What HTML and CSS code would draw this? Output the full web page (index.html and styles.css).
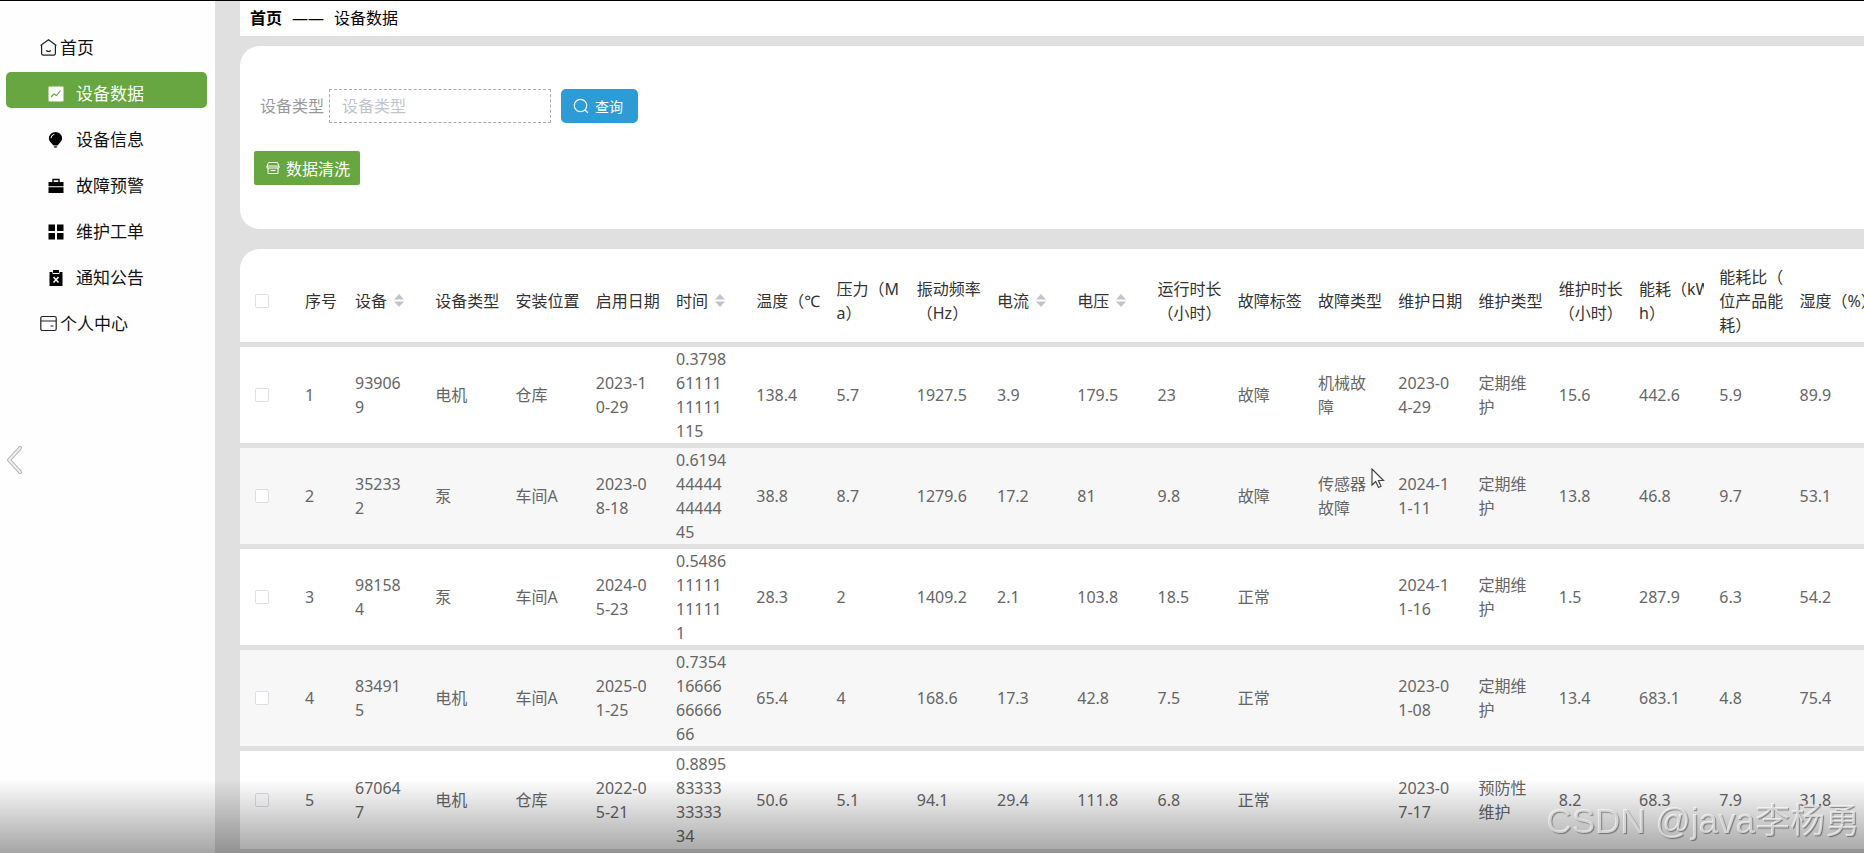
FILE: index.html
```html
<!DOCTYPE html>
<html lang="zh-CN">
<head>
  <meta charset="UTF-8">
  <meta name="viewport" content="width=device-width, initial-scale=1.0">
  <title>设备数据</title>
  <link rel="stylesheet" href="styles.css">
</head>
<body>
  <div class="layout">
    <nav class="sidebar">
      <a class="menu-item top" href="#">
        <svg class="icon" viewBox="0 0 17 17" fill="none" stroke="#222" stroke-width="1.2"><path d="M.6 6.5 8.5.8 16.4 6.5 M1.6 5.8V14.5Q1.6 16.2 3.3 16.2H13.7Q15.4 16.2 15.4 14.5V5.8 M6.2 11.5Q8.5 13.5 10.8 11.5"/></svg>
        <span>首页</span>
      </a>
      <a class="menu-item active" href="#">
        <svg class="icon" viewBox="0 0 16 16"><rect x="0.5" y="0.5" width="15" height="15" rx="1" fill="#fff"/><path d="M3 11 6 8 8.5 9.5 12.5 4.5" fill="none" stroke="#67a640" stroke-width="1.2"/></svg>
        <span>设备数据</span>
      </a>
      <a class="menu-item" href="#">
        <svg class="icon" viewBox="0 0 16 16"><path d="M7.5 0A6.6 6.4 0 0 0 .9 6.3C.9 9.5 3.5 11 5 13.2H10C11.5 11 14.1 9.5 14.1 6.3A6.6 6.4 0 0 0 7.5 0Z"/><path d="M5.5 13.6H9.5L8.5 16H6.5Z" fill="#555"/><path d="M3 6.2Q3.2 3 6.4 2.2" fill="none" stroke="#fff"/></svg>
        <span>设备信息</span>
      </a>
      <a class="menu-item" href="#">
        <svg class="icon" viewBox="0 0 16 16"><path d="M5 4V1.5H11V4" fill="none" stroke="#000" stroke-width="1.4"/><path d="M.5 4H15.5V8.3H.5Z M.5 9.3H15.5V15H.5Z"/></svg>
        <span>故障预警</span>
      </a>
      <a class="menu-item" href="#">
        <svg class="icon" viewBox="0 0 16 16"><path d="M.5.5H7V7H.5Z M9 .5H15.5V7H9Z M.5 9H7V15.5H.5Z M9 9H15.5V15.5H9Z"/></svg>
        <span>维护工单</span>
      </a>
      <a class="menu-item" href="#">
        <svg class="icon" viewBox="0 0 16 16"><path d="M1.5 2H4.5V4H11.5V2H14.5V16H1.5Z M5 0H11V3H5Z"/><path d="M5.5 7 10.5 12.5 M10.5 7 5.5 12.5" stroke="#fff" stroke-width="1.5"/></svg>
        <span>通知公告</span>
      </a>
      <a class="menu-item top" href="#">
        <svg class="icon" viewBox="0 0 17 17" fill="none" stroke="#222" stroke-width="1.2"><rect x="0.8" y="1.5" width="15.4" height="14" rx="1.5"/><path d="M1 6H16 M10.5 11H13.5"/></svg>
        <span>个人中心</span>
      </a>
    </nav>

    <main class="main">
      <div class="breadcrumb"><b>首页</b><span>——</span><span>设备数据</span></div>

      <form class="card search-card">
        <div class="search-row">
          <label for="deviceType">设备类型</label>
          <input id="deviceType" type="text" placeholder="设备类型">
          <button class="btn-query" type="button">
            <svg width="16" height="16" viewBox="0 0 16 16" fill="none" stroke="#fff" stroke-width="1.2"><circle cx="7.5" cy="7.5" r="6.2"/><path d="M12 12 15 15"/></svg>
            查询
          </button>
        </div>
        <button class="btn-clean" type="button">
          <svg width="14" height="14" viewBox="0 0 14 14" fill="none" stroke="#fff"><path d="M2.5 1.5H11.5L13 5H1Z M1 5V7H13V5 M2 7V12.5H12V7 M4.5 9.5H9.5"/></svg>
          数据清洗
        </button>
      </form>

      <div class="card table-card">
        <table class="data-table">
          <colgroup><col class="col-check"><col class="col-index"><col span="19"></colgroup>
          <thead>
            <tr>
              <th><input type="checkbox" aria-label="全选"></th>
              <th>序号</th>
              <th>设备<svg class="sort" viewBox="0 0 10 13"><path d="M5 0 10 5.5H0Z M0 7.5H10L5 13Z"/></svg></th>
              <th>设备类型</th>
              <th>安装位置</th>
              <th>启用日期</th>
              <th>时间<svg class="sort" viewBox="0 0 10 13"><path d="M5 0 10 5.5H0Z M0 7.5H10L5 13Z"/></svg></th>
              <th>温度（℃</th>
              <th>压力（M<br>a）</th>
              <th>振动频率<br>（Hz）</th>
              <th>电流<svg class="sort" viewBox="0 0 10 13"><path d="M5 0 10 5.5H0Z M0 7.5H10L5 13Z"/></svg></th>
              <th>电压<svg class="sort" viewBox="0 0 10 13"><path d="M5 0 10 5.5H0Z M0 7.5H10L5 13Z"/></svg></th>
              <th>运行时长<br>（小时）</th>
              <th>故障标签</th>
              <th>故障类型</th>
              <th>维护日期</th>
              <th>维护类型</th>
              <th>维护时长<br>（小时）</th>
              <th><div class="clip">能耗（kW<br>h）</div></th>
              <th><div class="clip">能耗比（单<br>位产品能<br>耗）</div></th>
              <th>湿度（%）</th>
            </tr>
          </thead>
          <tbody>
            <tr>
              <td><input type="checkbox" aria-label="选择第1行"></td>
              <td>1</td><td>939069</td><td>电机</td><td>仓库</td><td>2023-10-29</td><td>0.37986111111111115</td>
              <td>138.4</td><td>5.7</td><td>1927.5</td><td>3.9</td><td>179.5</td><td>23</td>
              <td>故障</td><td>机械故障</td><td>2023-04-29</td><td>定期维护</td>
              <td>15.6</td><td>442.6</td><td>5.9</td><td>89.9</td>
            </tr>
            <tr>
              <td><input type="checkbox" aria-label="选择第2行"></td>
              <td>2</td><td>352332</td><td>泵</td><td>车间A</td><td>2023-08-18</td><td>0.6194444444444445</td>
              <td>38.8</td><td>8.7</td><td>1279.6</td><td>17.2</td><td>81</td><td>9.8</td>
              <td>故障</td><td>传感器故障</td><td>2024-11-11</td><td>定期维护</td>
              <td>13.8</td><td>46.8</td><td>9.7</td><td>53.1</td>
            </tr>
            <tr>
              <td><input type="checkbox" aria-label="选择第3行"></td>
              <td>3</td><td>981584</td><td>泵</td><td>车间A</td><td>2024-05-23</td><td>0.548611111111111</td>
              <td>28.3</td><td>2</td><td>1409.2</td><td>2.1</td><td>103.8</td><td>18.5</td>
              <td>正常</td><td></td><td>2024-11-16</td><td>定期维护</td>
              <td>1.5</td><td>287.9</td><td>6.3</td><td>54.2</td>
            </tr>
            <tr>
              <td><input type="checkbox" aria-label="选择第4行"></td>
              <td>4</td><td>834915</td><td>电机</td><td>车间A</td><td>2025-01-25</td><td>0.7354166666666666</td>
              <td>65.4</td><td>4</td><td>168.6</td><td>17.3</td><td>42.8</td><td>7.5</td>
              <td>正常</td><td></td><td>2023-01-08</td><td>定期维护</td>
              <td>13.4</td><td>683.1</td><td>4.8</td><td>75.4</td>
            </tr>
            <tr>
              <td><input type="checkbox" aria-label="选择第5行"></td>
              <td>5</td><td>670647</td><td>电机</td><td>仓库</td><td>2022-05-21</td><td>0.8895833333333334</td>
              <td>50.6</td><td>5.1</td><td>94.1</td><td>29.4</td><td>111.8</td><td>6.8</td>
              <td>正常</td><td></td><td>2023-07-17</td><td>预防性维护</td>
              <td>8.2</td><td>68.3</td><td>7.9</td><td>31.8</td>
            </tr>
          </tbody>
        </table>
      </div>
    </main>
  </div>

  <button class="prev" type="button" aria-label="上一张">
    <svg width="18" height="30" viewBox="0 0 18 30" fill="none" stroke-linecap="round" stroke-linejoin="round"><path d="M14 3 3 15 14 27" stroke="#b0b0b0" stroke-width="4"/><path d="M14 3 3 15 14 27" stroke="#eee" stroke-width="2"/></svg>
  </button>
  <svg class="cursor" width="14" height="21" viewBox="0 0 14 21"><path d="M1 1V17L4.7 13.5 7.5 19.5 10 18.3 7.4 12.5H12.5Z" fill="#fff" stroke="#444" stroke-width="1.2"/></svg>
  <div class="shade"></div>
  <div class="watermark">CSDN @java李杨勇</div>
</body>
</html>
```

FILE: styles.css
```css
* {
  box-sizing: border-box;
}
body {
  margin: 0;
  font-family: "Noto Sans", "Noto Sans CJK SC", sans-serif;
  font-size: 16px;
  line-height: 24px;
  color: #000;
  background: #e0e0e0;
  overflow: hidden;
}
button, input {
  font-family: inherit;
}
.layout {
  display: flex;
  gap: 25px;
  height: 100vh;
  border-top: 1px solid #000;
}

/* sidebar */
.sidebar {
  flex: 0 0 215px;
  padding: 25px 8px 0 6px;
  background: #fefefe;
}
.menu-item {
  display: flex;
  align-items: center;
  gap: 12px;
  height: 36px;
  margin-bottom: 10px;
  padding: 7px 0 0 42px;
  border-radius: 5px;
  font-size: 17px;
  color: #111;
  text-decoration: none;
}
.menu-item.top {
  gap: 3px;
  padding-left: 34px;
}
.menu-item.active {
  background: #67a640;
  color: #fff;
}
.icon {
  width: 16px;
  height: 16px;
}
.top .icon {
  width: 17px;
  height: 17px;
}

/* content */
.main {
  flex: 1;
  min-width: 0;
  overflow: hidden;
}
.breadcrumb {
  display: flex;
  align-items: center;
  gap: 10px;
  height: 35px;
  padding: 0 0 2px 10px;
  background: #fff;
}
.card {
  background: #fff;
}
.search-card {
  margin-top: 10px;
  padding: 43px 14px 44px;
  border-radius: 20px 0 0 20px;
}
.search-row {
  display: flex;
  align-items: center;
  margin-bottom: 28px;
  padding-left: 6px;
}
.search-row label {
  color: #999;
}
.search-row input {
  width: 222px;
  height: 34px;
  margin: 0 10px 0 5px;
  padding: 0 12px;
  border: 1px dashed #aaa;
  font-size: 16px;
  color: #666;
}
.search-row input::placeholder {
  color: #c0c4cc;
}
.btn-query, .btn-clean {
  display: flex;
  align-items: center;
  gap: 6px;
  height: 34px;
  border: none;
  color: #fff;
}
.btn-query {
  padding: 0 15px 0 12px;
  border-radius: 5px;
  background: #2d9cd6;
  font-size: 14px;
}
.btn-clean {
  padding: 0 10px 0 12px;
  border-radius: 2px;
  background: #67a640;
  font-size: 16px;
}

/* table */
.table-card {
  margin-top: 20px;
  border-radius: 20px 0 0 0;
  overflow: hidden;
}
.data-table {
  width: 100%;
  min-width: 1630px;
  table-layout: fixed;
  border-collapse: collapse;
}
.col-check {
  width: 55px;
}
.col-index {
  width: 50px;
}
.data-table th {
  height: 95px;
  padding: 16px 0 4px 10px;
  font-weight: 400;
  text-align: left;
  white-space: nowrap;
  color: #333;
}
.data-table td {
  height: 101px;
  padding: 0 17px 0 10px;
  border-top: 5px solid #e0e0e0;
  word-break: break-all;
  color: #666;
}
.data-table tbody tr:nth-child(even) {
  background: #f7f7f7;
}
.data-table tr > :first-child {
  padding-left: 15px;
}
.data-table input {
  display: block;
  appearance: none;
  width: 14px;
  height: 14px;
  margin: 0;
  border: 1px solid #dcdfe6;
  border-radius: 2px;
  background: #fff;
}
.clip {
  width: 65px;
  overflow: hidden;
}
.sort {
  width: 10px;
  height: 13px;
  margin-left: 7px;
  fill: #c0c4cc;
}

/* layers over the page */
.prev {
  position: absolute;
  left: 6px;
  top: 445px;
  padding: 0;
  border: none;
  background: none;
}
.prev svg {
  display: block;
}
.cursor {
  position: absolute;
  left: 1371px;
  top: 468px;
}
.shade {
  position: fixed;
  left: 0;
  right: 0;
  bottom: 0;
  height: 74px;
  background: linear-gradient(rgba(0, 0, 0, 0), rgba(0, 0, 0, 0.35));
  pointer-events: none;
}
.watermark {
  position: fixed;
  right: 4px;
  bottom: 12px;
  font-family: "Liberation Sans", "Noto Sans CJK SC", sans-serif;
  font-size: 35px;
  line-height: 40px;
  color: rgba(255, 255, 255, 0.65);
  text-shadow: 1px 1px 1px rgba(0, 0, 0, 0.4);
}
```
